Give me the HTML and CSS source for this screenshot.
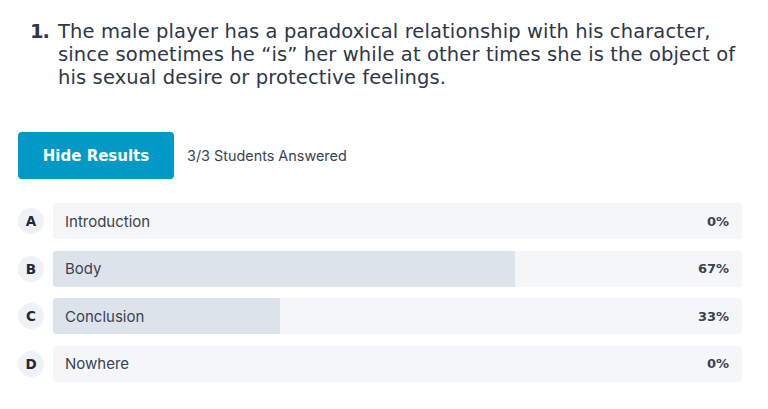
FILE: index.html
```html
<!DOCTYPE html>
<html>
<head>
<meta charset="utf-8">
<link rel="stylesheet" href="styles.css">
</head>
<body>
<div class="page">
  <div class="question">
    <span class="num">1.</span>
    <p class="qtext">The male player has a paradoxical relationship with his character,<br>since sometimes he “is” her while at other times she is the object of<br>his sexual desire or protective feelings.</p>
  </div>
  <div class="actions">
    <button class="btn">Hide Results</button>
    <span class="answered">3/3 Students Answered</span>
  </div>
  <div class="options">
    <div class="option">
      <span class="letter">A</span>
      <div class="bar"><div class="fill" style="width:0%"></div><span class="label">Introduction</span><span class="pct">0%</span></div>
    </div>
    <div class="option">
      <span class="letter">B</span>
      <div class="bar"><div class="fill" style="width:67%"></div><span class="label">Body</span><span class="pct">67%</span></div>
    </div>
    <div class="option">
      <span class="letter">C</span>
      <div class="bar"><div class="fill" style="width:33%"></div><span class="label">Conclusion</span><span class="pct">33%</span></div>
    </div>
    <div class="option">
      <span class="letter">D</span>
      <div class="bar"><div class="fill" style="width:0%"></div><span class="label">Nowhere</span><span class="pct">0%</span></div>
    </div>
  </div>
</div>
</body>
</html>
```
FILE: styles.css
```css
html, body { margin: 0; padding: 0; background: #fff; }
.page { padding: 20px 26px 0 18px; width: 724px; }
.question { display: flex; padding-left: 12px; gap: 9px; color: #2d3748; font-family: "DejaVu Sans", sans-serif; font-size: 19.5px; line-height: 23px; white-space: nowrap; }
.num { font-weight: 700; letter-spacing: -1px; }
.qtext { margin: 0; font-weight: 400; letter-spacing: 0.12px; }
.actions { display: flex; align-items: center; gap: 13px; margin-top: 43px; }
.btn { width: 156px; height: 47px; border: 0; border-radius: 4px; background: #0399c6; color: #fff; font-family: "DejaVu Sans", sans-serif; font-size: 15px; font-weight: 700; }
.answered { font-family: Inter, sans-serif; font-size: 14.4px; color: #3a4350; }
.options { margin-top: 24px; display: flex; flex-direction: column; gap: 11.5px; }
.option { display: flex; align-items: center; gap: 9px; }
.letter { width: 26px; height: 26px; border-radius: 50%; background: #eef2f6; display: flex; align-items: center; justify-content: center; font-family: "DejaVu Sans", sans-serif; font-weight: 700; font-size: 13.5px; color: #1f2937; }
.bar { position: relative; flex: 1; height: 36px; border-radius: 3px; background: #f5f6f8; display: flex; align-items: center; justify-content: space-between; padding: 0 13px 0 12px; overflow: hidden; }
.fill { position: absolute; left: 0; top: 0; bottom: 0; background: #dde3ea; }
.label { position: relative; font-family: Inter, sans-serif; font-size: 15px; color: #3a4350; }
.pct { position: relative; font-family: "DejaVu Sans", sans-serif; font-weight: 700; font-size: 13px; color: #3a4350; }
```
